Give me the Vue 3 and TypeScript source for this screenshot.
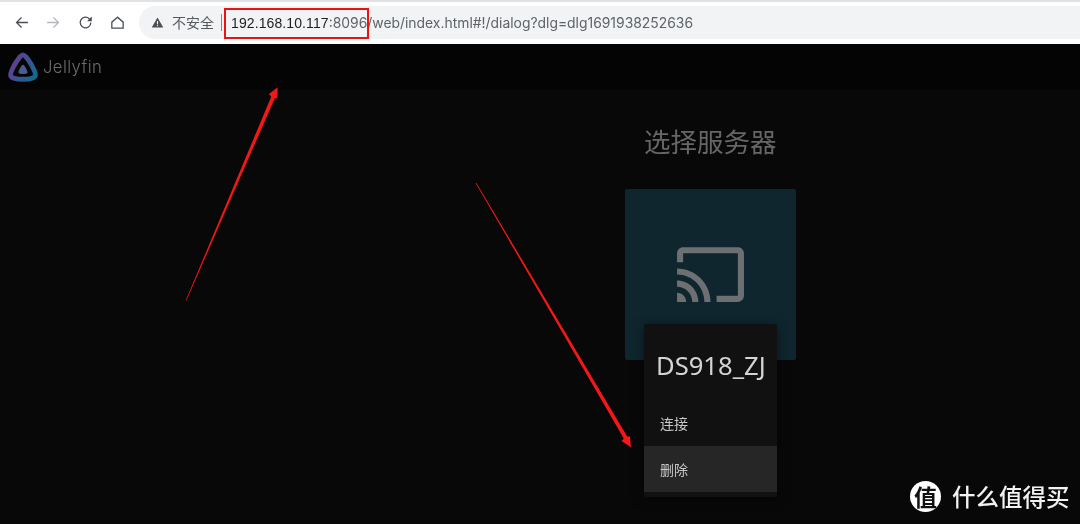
<script setup lang="ts">
const nav = [
  { id: 'back', d: 'M21 12H5M12 5l-7 7 7 7', cls: '' },
  { id: 'fwd', d: 'M3 12h16M12 5l7 7-7 7', cls: 'dim' },
]
</script>

<template>
  <div class="root">
    <div class="toolbar">
      <div class="navs">
        <svg v-for="n in nav" :key="n.id" class="nav-ic" :class="n.cls" viewBox="0 0 24 24"><path :d="n.d" /></svg>
        <svg class="nav-ic" viewBox="0 0 24 24"><path d="M19.500 12a7.500 7.500 0 1 1-2.200-5.300L20 9.400" /><path class="fill" d="M20.800 3.600v6.600h-6.600z" /></svg>
        <svg class="nav-ic" viewBox="0 0 24 24"><path d="M12 4.500 4 11.500V20h16v-8.500z" /></svg>
      </div>
      <div class="omni">
        <svg class="warn" viewBox="0 0 14 14"><path d="M7 1.500 13.200 12.500H.8z" /><rect x="6.400" y="5.400" width="1.200" height="3.600" fill="#f1f3f4" /><rect x="6.400" y="9.800" width="1.200" height="1.200" fill="#f1f3f4" /></svg>
        <span class="insecure soft">不安全</span>
        <span class="sep"></span>
        <span class="url soft"><b>192.168.10.117</b>:8096/web/index.html#!/dialog?dlg=dlg1691938252636</span>
      </div>
    </div>

    <div class="page">
      <header class="appbar">
        <svg class="logo" viewBox="2 2 26 25">
          <defs>
            <linearGradient id="jf" x1="0" y1="0.2" x2="1" y2="0.8">
              <stop offset="0" stop-color="#6a3a92" />
              <stop offset="1" stop-color="#14688f" />
            </linearGradient>
          </defs>
          <path d="M15 4C12 4 3 19 4.500 22.500 6 26 24 26 25.500 22.500 27 19 18 4 15 4Z" fill="none" stroke="url(#jf)" stroke-width="4.200" stroke-linejoin="round" />
          <path d="M15 12.500c-1.300 0-4.400 5.800-3.800 7.100.6 1.300 7 1.300 7.600 0 .6-1.300-2.500-7.100-3.800-7.100Z" fill="#4c5c92" />
        </svg>
        <span class="brand soft">Jellyfin</span>
      </header>
      <main class="main">
        <h1 class="title soft">选择服务器</h1>
        <div class="card">
          <svg class="cast" viewBox="0 0 24 24"><path d="M21 3H3c-1.100 0-2 .9-2 2v3h2V5h18v14h-7v2h7c1.100 0 2-.9 2-2V5c0-1.100-.9-2-2-2zM1 18v3h3c0-1.660-1.340-3-3-3zm0-4v2c2.760 0 5 2.240 5 5h2c0-3.870-3.130-7-7-7zm0-4v2c4.970 0 9 4.030 9 9h2c0-6.080-4.930-11-11-11z" /></svg>
        </div>
      </main>

      <div class="menu">
        <div class="menu-title"><span class="soft">DS918_ZJ</span></div>
        <div class="item"><span class="soft">连接</span></div>
        <div class="item active"><span class="soft">删除</span></div>
      </div>
    </div>

    <div class="redbox"></div>

    <svg class="arrows" viewBox="0 0 1080 524">
      <polygon points="186.300,300.800 274.800,98.300 277.300,98.300 277.700,87.300 269,94 271.200,96.700 185.700,300.600" fill="#f21818" />
      <polygon points="476.300,182.800 627.200,436.500 630,436.500 631,447.300 621.500,441 623.800,438.500 475.700,183.200" fill="#f21818" />
    </svg>

    <div class="watermark">
      <span class="wm-badge">值</span>
      <span class="wm-text soft">什么值得买</span>
    </div>
  </div>
</template>

<style>
html, body { margin: 0; background: #080808; }
</style>

<style scoped>
.root {
  position: relative;
  width: 1080px;
  height: 524px;
  overflow: hidden;
  display: flex;
  flex-direction: column;
  background: #080808;
  font-family: "Noto Sans", "Noto Sans CJK SC", sans-serif;
}
.soft { display: inline-block; will-change: transform; }
.toolbar {
  flex: none;
  box-sizing: border-box;
  height: 44px;
  border-top: 2px solid #e0e2e6;
  background: #fff;
  display: flex;
  align-items: center;
  padding: 0 0 1px 13px;
}
.navs { display: flex; align-items: center; gap: 15px; width: 126px; }
.nav-ic { width: 17px; height: 17px; fill: none; stroke: #4a4d51; stroke-width: 1.800; }
.nav-ic.dim { stroke: #b4b7bb; }
.nav-ic .fill { fill: #4a4d51; stroke: none; }
.omni {
  flex: 1;
  height: 33px;
  background: #f1f3f4;
  border-radius: 17px 0 0 17px;
  display: flex;
  align-items: center;
  padding-left: 11px;
  color: #5f6368;
  font-size: 13.500px;
}
.warn { width: 13px; height: 13px; fill: #4b4e52; margin: 0 8px 0 1px; }
.insecure { font-size: 14px; color: #55585c; margin-top: -1px; font-family: "Noto Sans CJK SC", sans-serif; }
.sep { width: 1px; height: 17px; background: #85888c; margin: 0 9px 0 7px; }
.url {
  font-family: Inter, sans-serif;
  font-size: 13.900px;
  color: #5f6368;
  white-space: nowrap;
}
.url b {
  font-family: "Liberation Sans", sans-serif;
  font-size: 14px;
  letter-spacing: .1px;
  font-weight: 400;
  color: #1d1e20;
}
.page { position: relative; flex: 1; display: flex; flex-direction: column; }
.appbar {
  flex: none;
  height: 46px;
  background: #040404;
  display: flex;
  align-items: center;
  padding-left: 8px;
  box-sizing: border-box;
}
.logo { width: 30px; height: 30px; margin-right: 5px; }
.brand { font-size: 16.700px; font-weight: 300; color: #6c6c6c; letter-spacing: .4px; margin-top: -1px; font-family: Inter, sans-serif; }
.main {
  flex: 1;
  display: flex;
  flex-direction: column;
  width: 171px;
  margin-left: 625px;
  align-items: center;
}
.title {
  margin: 33px 0 30px;
  font-size: 26.500px;
  line-height: 36px;
  font-weight: 400;
  color: #666;
  white-space: nowrap;
  font-family: "Noto Sans CJK SC", sans-serif;
}
.card {
  width: 171px;
  height: 171px;
  border-radius: 2px;
  background: #0f262e;
  display: flex;
  justify-content: center;
  padding-top: 49px;
  box-sizing: border-box;
}
.cast { width: 73px; height: 73px; fill: #6c7072; }
.menu {
  position: absolute;
  left: 644px;
  top: 280px;
  width: 133px;
  height: 173px;
  border-radius: 2px;
  background: #111;
  box-sizing: border-box;
  box-shadow: 0 2px 12px rgba(0,0,0,.5);
}
.menu-title {
  height: 79px;
  line-height: 84px;
  padding-left: 12px;
  font-size: 25.600px;
  color: #d4d4d4;
  white-space: nowrap;
}
.item {
  height: 43px;
  line-height: 41px;
  padding-left: 16px;
  font-size: 14px;
  color: #c8c8c8;
  font-family: "Noto Sans CJK SC", sans-serif;
}
.item.active { height: 46px; line-height: 46px; background: #262626; }
.redbox {
  position: absolute;
  left: 224px;
  top: 8px;
  width: 145px;
  height: 31px;
  box-sizing: border-box;
  border: 2px solid #ee1111;
}
.arrows { position: absolute; inset: 0; width: 1080px; height: 524px; pointer-events: none; }
.watermark {
  position: absolute;
  left: 910px;
  top: 481px;
  display: flex;
  align-items: center;
  gap: 11px;
}
.wm-badge {
  width: 31px;
  height: 31px;
  border-radius: 50%;
  background: #fff;
  color: #111;
  font-size: 23px;
  line-height: 31px;
  text-align: center;
  font-family: "Noto Sans CJK SC", sans-serif;
  font-weight: 700;
}
.wm-text {
  font-size: 23.500px;
  line-height: 31px;
  color: #f2f2f2;
  font-weight: 500;
  font-family: "Noto Sans CJK SC", sans-serif;
  white-space: nowrap;
}
</style>
